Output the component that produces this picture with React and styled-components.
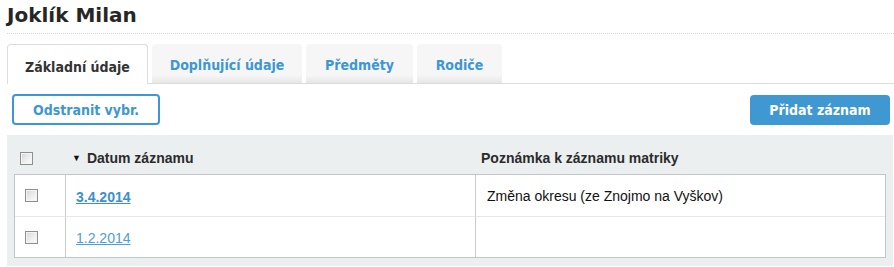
import React from "react";
import styled, { createGlobalStyle } from "styled-components";

const GlobalStyle = createGlobalStyle`
  html, body {
    margin: 0;
    padding: 0;
    background: #fff;
  }
  body {
    font-family: "Liberation Sans", Arial, sans-serif;
    font-size: 14px;
    color: #222;
  }
`;

const Page = styled.div`
  width: 894px;
  padding: 0 1px 0 7px;
  box-sizing: border-box;
`;

const Title = styled.h1`
  margin: 0 -1px 0 0;
  padding: 3px 0 0 0;
  height: 34px;
  box-sizing: border-box;
  font-family: "DejaVu Sans", Verdana, sans-serif;
  font-size: 20px;
  font-weight: bold;
  color: #262626;
  border-bottom: 1px dotted #d6d6d6;
`;

const TabBar = styled.div`
  display: flex;
  gap: 4px;
  margin: 10px -1px 0 0;
  height: 40px;
  border-bottom: 1px solid #dcdcdc;
  box-sizing: border-box;
`;

const Tab = styled.div`
  display: flex;
  align-items: center;
  justify-content: center;
  width: ${(p) => p.$w}px;
  height: ${(p) => (p.$active ? 40 : 39)}px;
  box-sizing: border-box;
  border-radius: 4px 4px 0 0;
  font-family: "DejaVu Sans Condensed", "DejaVu Sans", Tahoma, sans-serif;
  font-size: 14px;
  font-weight: bold;
  color: ${(p) => (p.$active ? "#333" : "#3d97d4")};
  background: ${(p) =>
    p.$active
      ? "#fff"
      : "linear-gradient(to bottom, #f6f6f6 0%, #f6f6f6 80%, #e6e6e6 100%)"};
  border: ${(p) => (p.$active ? "1px solid #dcdcdc" : "none")};
  border-bottom: none;
  padding-top: ${(p) => (p.$active ? 4 : 3)}px;
`;

const Toolbar = styled.div`
  display: flex;
  justify-content: space-between;
  align-items: center;
  margin-top: 10px;
  padding: 0 3px 0 5px;
`;

const OutlineButton = styled.button`
  width: 148px;
  height: 31px;
  box-sizing: border-box;
  border: 2px solid #3d97d4;
  border-radius: 4px;
  background: #fff;
  color: #3d97d4;
  font-family: "DejaVu Sans Condensed", "DejaVu Sans", Tahoma, sans-serif;
  font-size: 14px;
  font-weight: bold;
  padding: 0;
`;

const PrimaryButton = styled.button`
  width: 140px;
  height: 30px;
  box-sizing: border-box;
  border: none;
  border-radius: 4px;
  background: #3f98d2;
  color: #fff;
  font-family: "DejaVu Sans Condensed", "DejaVu Sans", Tahoma, sans-serif;
  font-size: 14px;
  font-weight: bold;
  padding: 0;
`;

const Panel = styled.div`
  margin-top: 10px;
  background: #eceff0;
  padding: 0 7px 9px 7px;
  height: 131px;
  box-sizing: border-box;
`;

const Grid = styled.div`
  display: grid;
  grid-template-columns: 50px 410px 1fr;
`;

const HeadCell = styled.div`
  height: 39px;
  box-sizing: border-box;
  padding: 15px 0 0 ${(p) => p.$pl}px;
  font-weight: bold;
  font-size: 14px;
  color: #2b2b2b;
  display: flex;
  align-items: flex-start;
`;

const Body = styled.div`
  grid-column: 1 / -1;
  display: grid;
  grid-template-columns: 50px 410px 1fr;
  background: #fff;
  border: 1px solid #c2c6c8;
`;

const Cell = styled.div`
  height: 41px;
  box-sizing: border-box;
  padding-left: ${(p) => p.$pl}px;
  display: flex;
  align-items: center;
  border-left: ${(p) => (p.$first ? "none" : "1px solid #c9cccd")};
  border-top: ${(p) => (p.$top ? "1px solid #e6e8e9" : "none")};
  font-size: 14px;
  color: #111;
`;

const Check = styled.span`
  display: inline-block;
  width: 13px;
  height: 13px;
  box-sizing: border-box;
  border: 1px solid #8e8f8f;
  background: linear-gradient(135deg, #d6d6d6 0%, #f0f0f0 60%, #fdfdfd 100%);
  box-shadow: inset 0 0 0 1px #f4f4f4;
  margin-top: ${(p) => p.$mt || 0}px;
`;

const SortArrow = styled.span`
  font-size: 9px;
  margin-right: 6px;
  margin-top: 3px;
  color: #111;
`;

const DateLink = styled.a`
  color: ${(p) => (p.$bold ? "#3a8fd0" : "#4aa0da")};
  font-weight: ${(p) => (p.$bold ? "bold" : "normal")};
  text-decoration: underline;
  font-size: 14px;
  cursor: pointer;
  margin-top: 2px;
`;

const rows = [
  { date: "3.4.2014", note: "Změna okresu (ze Znojmo na Vyškov)", bold: true },
  { date: "1.2.2014", note: "", bold: false },
];

export default function App() {
  return (
    <Page>
      <GlobalStyle />
      <Title>Joklík Milan</Title>
      <TabBar>
        <Tab $active $w={141}>Základní údaje</Tab>
        <Tab $w={150}>Doplňující údaje</Tab>
        <Tab $w={107}>Předměty</Tab>
        <Tab $w={85}>Rodiče</Tab>
      </TabBar>
      <Toolbar>
        <OutlineButton>Odstranit vybr.</OutlineButton>
        <PrimaryButton>Přidat záznam</PrimaryButton>
      </Toolbar>
      <Panel>
        <Grid>
          <HeadCell $pl={6}>
            <Check $mt={2} />
          </HeadCell>
          <HeadCell $pl={8}>
            <SortArrow>▼</SortArrow>Datum záznamu
          </HeadCell>
          <HeadCell $pl={7}>Poznámka k záznamu matriky</HeadCell>
          <Body>
            {rows.map((r, i) => (
              <React.Fragment key={r.date}>
                <Cell $first $top={i > 0} $pl={10}>
                  <Check />
                </Cell>
                <Cell $top={i > 0} $pl={10}>
                  <DateLink $bold={r.bold}>{r.date}</DateLink>
                </Cell>
                <Cell $top={i > 0} $pl={11}>
                  {r.note}
                </Cell>
              </React.Fragment>
            ))}
          </Body>
        </Grid>
      </Panel>
    </Page>
  );
}
